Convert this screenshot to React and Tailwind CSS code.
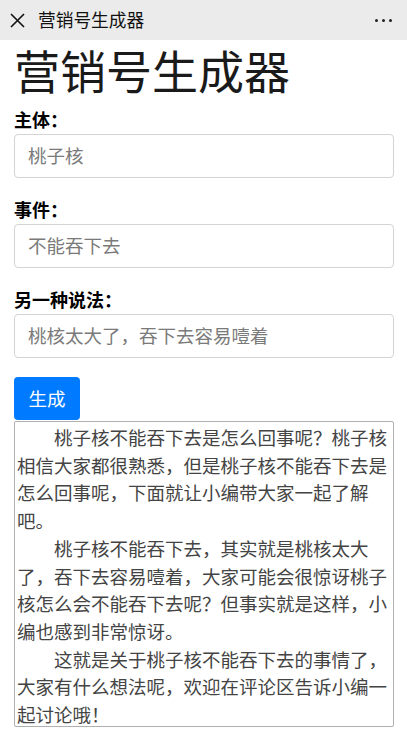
import React from "react";

const font = { fontFamily: '"Noto Sans CJK SC", "Noto Sans", sans-serif' };

function Field({ label, value, mt }) {
  return (
    <div className={mt}>
      <div className="text-[18px] leading-[24px] font-bold text-black">{label}</div>
      <div className="mt-[3px] h-[44px] w-[380px] rounded-[4px] border border-[#d4d4d4] bg-white flex items-center px-[13px] text-[18.5px] text-[#7a7a7a]">
        {value}
      </div>
    </div>
  );
}

export default function App() {
  return (
    <div className="w-[407px] min-h-[745px] bg-white" style={font}>
      <div className="h-[40px] bg-[#ebebeb] flex items-center px-[10px]">
        <svg width="15" height="15" viewBox="0 0 15 15" className="shrink-0">
          <path d="M1 1 L14 14 M14 1 L1 14" stroke="#111" strokeWidth="1.6" />
        </svg>
        <div className="ml-[13px] text-[17.7px] text-[#111] leading-none">营销号生成器</div>
        <div className="ml-auto mr-[5px] flex gap-[4px]">
          <span className="w-[3px] h-[3px] rounded-full bg-[#222]"></span>
          <span className="w-[3px] h-[3px] rounded-full bg-[#222]"></span>
          <span className="w-[3px] h-[3px] rounded-full bg-[#222]"></span>
        </div>
      </div>
      <div className="px-[14px]">
        <h1 className="text-[46px] leading-[56px] text-[#1a1a1a] font-normal mt-[1px]">营销号生成器</h1>
        <Field label="主体：" value="桃子核" mt="mt-[10px]" />
        <Field label="事件：" value="不能吞下去" mt="mt-[19px]" />
        <Field label="另一种说法：" value="桃核太大了，吞下去容易噎着" mt="mt-[19px]" />
        <button className="mt-[19px] h-[43px] w-[66px] rounded-[4px] bg-[#007bff] text-white text-[18.5px] flex items-center justify-center">
          生成
        </button>
        <div className="mt-[1px] h-[306px] w-[380px] border border-[#b0b0b0] rounded-[2px] px-[2px] pt-[2px] text-[18.5px] leading-[27.7px] text-[#444] overflow-hidden">
          <p className="indent-[2em]">桃子核不能吞下去是怎么回事呢？桃子核相信大家都很熟悉，但是桃子核不能吞下去是怎么回事呢，下面就让小编带大家一起了解吧。</p>
          <p className="indent-[2em]">桃子核不能吞下去，其实就是桃核太大了，吞下去容易噎着，大家可能会很惊讶桃子核怎么会不能吞下去呢？但事实就是这样，小编也感到非常惊讶。</p>
          <p className="indent-[2em]">这就是关于桃子核不能吞下去的事情了，大家有什么想法呢，欢迎在评论区告诉小编一起讨论哦！</p>
        </div>
      </div>
    </div>
  );
}
